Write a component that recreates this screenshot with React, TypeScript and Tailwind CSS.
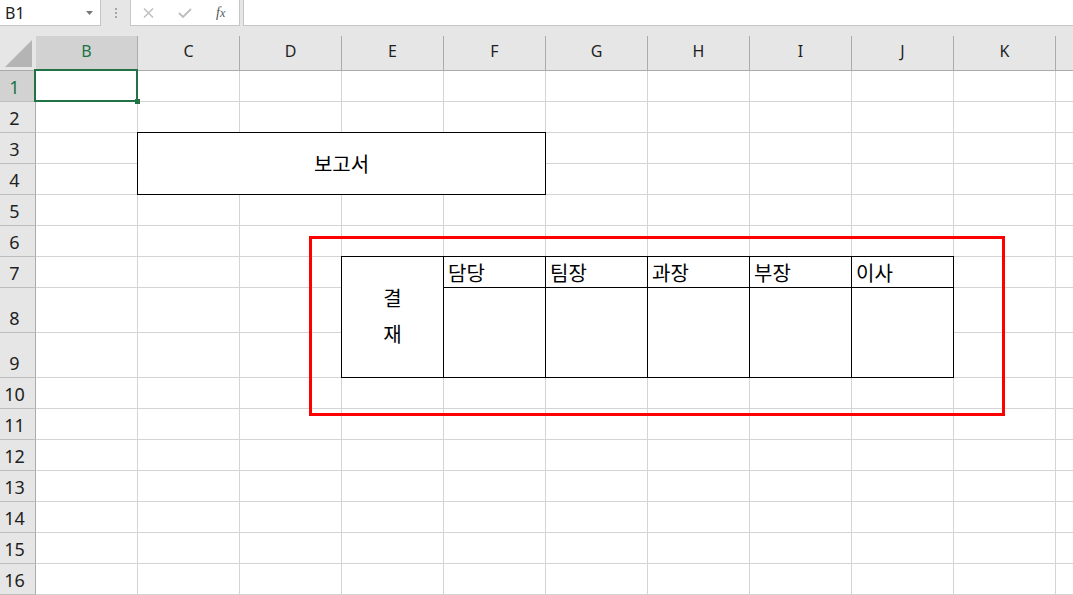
import React from "react";

const COLS = ["B", "C", "D", "E", "F", "G", "H", "I", "J", "K"];
const ROWS = Array.from({ length: 16 }, (_, i) => i + 1);
const APPROVERS: Record<string, string> = { F: "담당", G: "팀장", H: "과장", I: "부장", J: "이사" };

const KR = "font-['Noto_Sans_CJK_KR',sans-serif]";

// which cells are hidden under a merged area
function isCovered(col: string, row: number) {
  if (row === 4 && ["C", "D", "E", "F"].includes(col)) return true;
  if (row === 3 && ["D", "E", "F"].includes(col)) return true;
  if (col === "E" && (row === 8 || row === 9)) return true;
  if (row === 9 && APPROVERS[col]) return true;
  return false;
}

function SheetCell({ col, row }: { col: string; row: number }) {
  // merged report title C3:F4
  if (col === "C" && row === 3) {
    return (
      <div className={`relative z-10 -ml-px -mt-px col-span-4 row-span-2 border border-black bg-white flex items-center justify-center text-[20px] text-black ${KR}`}>
        보고서
      </div>
    );
  }
  // approval label E7:E9
  if (col === "E" && row === 7) {
    return (
      <div className={`relative z-10 -ml-px -mt-px row-span-3 border border-black bg-white flex items-center justify-center text-center text-[20px] leading-[36px] text-black ${KR}`}>
        <div className="-mt-[2px]">
          결
          <br />재
        </div>
      </div>
    );
  }
  if (APPROVERS[col] && row === 7) {
    return (
      <div className={`relative z-10 -ml-px -mt-px border border-black bg-white flex items-end pl-[4px] text-[20px] leading-[28px] text-black ${KR}`}>
        {APPROVERS[col]}
      </div>
    );
  }
  if (APPROVERS[col] && row === 8) {
    return <div className="relative z-10 -ml-px -mt-px row-span-2 border border-black bg-white" />;
  }
  if (col === "B" && row === 1) {
    return (
      <div className="relative border-r border-b border-[#d4d4d4] bg-white">
        <div className="absolute -left-[2px] -top-[2px] -right-[1px] -bottom-[1px] z-20 border-2 border-[#217346]" />
        <div className="absolute -right-[3px] -bottom-[3px] z-30 h-[5px] w-[5px] bg-[#217346]" />
      </div>
    );
  }
  return <div className="border-r border-b border-[#d4d4d4] bg-white" />;
}

function FormulaBar() {
  return (
    <div className="flex h-[26px] bg-[#e6e6e6] font-['Noto_Sans',sans-serif]">
      <div className="flex w-[101px] items-center justify-between border-r border-b border-[#c6c6c6] bg-white pl-[5px] pr-[7px]">
        <span className="text-[16px] leading-none text-[#222]">B1</span>
        <svg width="7" height="4" viewBox="0 0 7 4">
          <polygon points="0,0 7,0 3.5,4" fill="#777" />
        </svg>
      </div>
      <div className="flex w-[29px] items-center justify-center">
        <svg width="2" height="10" viewBox="0 0 2 10">
          <rect x="0" y="0" width="2" height="2" fill="#a6a6a6" />
          <rect x="0" y="4" width="2" height="2" fill="#a6a6a6" />
          <rect x="0" y="8" width="2" height="2" fill="#a6a6a6" />
        </svg>
      </div>
      <div className="flex w-[110px] items-center gap-[24px] border-x border-b border-[#c6c6c6] bg-white pl-[12px]">
        <svg width="11" height="10" viewBox="0 0 11 10">
          <path d="M1 0.5 L10 9.5 M10 0.5 L1 9.5" stroke="#bdbdbd" strokeWidth="1.4" />
        </svg>
        <svg width="14" height="10" viewBox="0 0 14 10">
          <path d="M1 5 L5 9 L13 1" stroke="#bdbdbd" strokeWidth="1.8" fill="none" />
        </svg>
        <span className="font-['Liberation_Serif',serif] text-[14px] italic leading-none text-[#555]">
          f<span className="text-[12px]">x</span>
        </span>
      </div>
      <div className="w-[3px]" />
      <div className="flex-1 border-l border-b border-[#c6c6c6] bg-white" />
    </div>
  );
}

export default function App() {
  return (
    <div className="h-[595px] w-[1073px] overflow-hidden bg-white">
      <FormulaBar />
      <div className="relative grid grid-cols-[36px_repeat(10,102px)_1fr] grid-rows-[45px_repeat(7,31px)_45px_45px_repeat(7,31px)] font-['Noto_Sans',sans-serif]">
        {/* corner */}
        <div className="flex flex-col border-b border-[#ababab] bg-[#e6e6e6]">
          <div className="h-[10px]" />
          <div className="flex-1">
            <svg width="35" height="34" viewBox="0 0 35 34">
              <polygon points="32,4 32,31 5,31" fill="#b4b4b4" />
            </svg>
          </div>
        </div>
        {COLS.map((c) => (
          <div key={c} className="flex flex-col border-b border-[#ababab] bg-[#e6e6e6]">
            <div className="h-[10px]" />
            <div
              className={`flex flex-1 items-center justify-center border-r border-[#ababab] pb-[4px] text-[16px] ${
                c === "B" ? "bg-[#d2d2d2] text-[#217346]" : "text-[#1f1f1f]"
              }`}
            >
              {c}
            </div>
          </div>
        ))}
        <div className="border-b border-[#ababab] bg-[#e6e6e6]" />

        {ROWS.map((r) => (
          <React.Fragment key={r}>
            <div
              className={`flex items-end justify-center border-r border-b border-r-[#ababab] border-b-[#bdbdbd] pr-[6px] pb-[4px] text-[18px] leading-[20px] ${
                r === 1 ? "bg-[#d2d2d2] text-[#217346]" : "bg-[#e6e6e6] text-[#1f1f1f]"
              }`}
            >
              {r}
            </div>
            {COLS.map((c) => (isCovered(c, r) ? null : <SheetCell key={c} col={c} row={r} />))}
            <div className="border-b border-[#d4d4d4] bg-white" />
          </React.Fragment>
        ))}

        {/* red highlight drawn over the approval block */}
        <div className="pointer-events-none absolute left-[309px] top-[210px] z-40 h-[180px] w-[696px] border-[3px] border-[#ff0000]" />
      </div>
    </div>
  );
}
